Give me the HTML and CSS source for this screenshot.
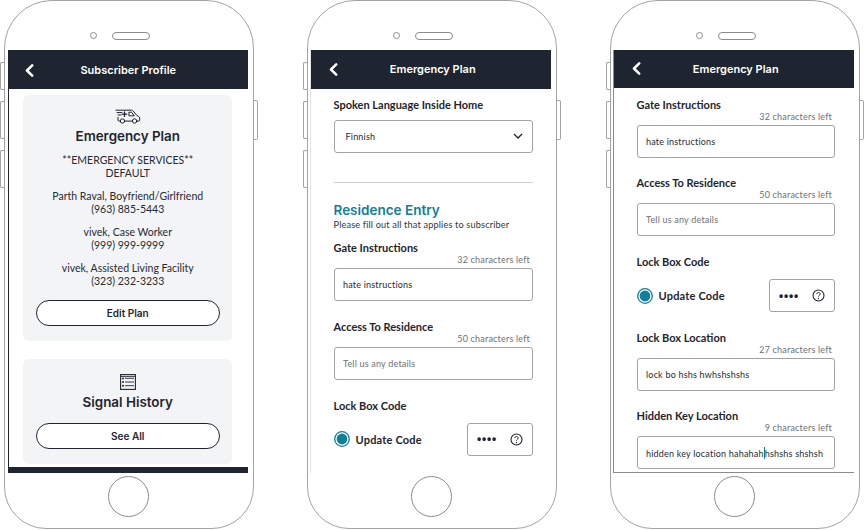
FILE: index.html
```html
<!DOCTYPE html>
<html lang="en">
<head>
<meta charset="utf-8">
<title>Emergency Plan screens</title>
<link rel="stylesheet" href="styles.css">
</head>
<body>
<svg class="defs" width="0" height="0" aria-hidden="true">
  <symbol id="back" viewBox="0 0 9 13"><path d="M7.2 1.4 2 6.5l5.2 5.1" fill="none" stroke="#fff" stroke-width="2.5" stroke-linecap="round" stroke-linejoin="round"/></symbol>
  <symbol id="help" viewBox="0 0 13 13"><circle cx="6.5" cy="6.5" r="5.5" fill="none" stroke="#1f2530" stroke-width="1.1"/><path d="M4.8 5.1c0-1 .8-1.6 1.7-1.6s1.7.6 1.7 1.5c0 1.3-1.7 1.4-1.7 2.6" fill="none" stroke="#1f2530" stroke-width="1"/><circle cx="6.5" cy="9.5" r=".65" fill="#1f2530"/></symbol>
  <symbol id="radio" viewBox="0 0 16 16"><circle cx="8" cy="8" r="7.3" fill="#fff" stroke="#0f7f9b" stroke-width="1.3"/><circle cx="8" cy="8" r="5.4" fill="#0f7f9b"/></symbol>
</svg>

<section class="phone phone-one">
  <span class="side side-a"></span><span class="side side-b"></span><span class="side side-c"></span><span class="side side-r"></span>
  <div class="top"><span class="camera"></span><span class="speaker"></span></div>
  <div class="screen screen-dark">
    <header class="bar bar-tall bar-low"><svg class="back"><use href="#back"/></svg><h1 class="bar-title">Subscriber Profile</h1></header>
    <div class="cards">
      <article class="card">
        <svg class="van" viewBox="0 0 26 15" aria-hidden="true">
          <g fill="none" stroke="#1f2530" stroke-width="1" stroke-linecap="round" stroke-linejoin="round">
            <path d="M1 1.2h15.6c.7 0 1.2.3 1.6.8l3.7 4.5 2 1.2c.5.3.8.8.8 1.3v2.2c0 .5-.4.9-.9.9h-2"/>
            <path d="M17.2 12.1H10M5 12.1H4c-.6 0-1-.4-1-1V8.4"/>
            <path d="M2 3.6h5M3 6h3"/>
            <path d="M9.5 3v4.4M7.3 5.2h4.4" stroke-width="1.3"/>
            <path d="M14.3 3.2h2.2l2.8 3.6h-5z"/>
            <circle cx="7.5" cy="12" r="2.2"/><circle cx="19.6" cy="12" r="2.2"/>
          </g>
        </svg>
        <h2 class="card-title">Emergency Plan</h2>
        <p class="contact">**EMERGENCY SERVICES**<br>DEFAULT</p>
        <p class="contact">Parth Raval, Boyfriend/Girlfriend<br>(963) 885-5443</p>
        <p class="contact">vivek, Case Worker<br>(999) 999-9999</p>
        <p class="contact">vivek, Assisted Living Facility<br>(323) 232-3233</p>
        <button class="pill pill-edit">Edit Plan</button>
      </article>
      <article class="card card-history">
        <svg class="list-icon" viewBox="0 0 16 16" aria-hidden="true">
          <g fill="none" stroke="#1f2530"><rect x=".6" y=".6" width="14.8" height="14.8" stroke-width="1.1"/><path d="M5 4.3h9M5 8h9M5 11.7h9M1 2.4h14" stroke-width=".9"/></g>
          <g fill="#1f2530"><circle cx="3" cy="4.6" r="1"/><circle cx="3" cy="8" r="1"/><circle cx="3" cy="11.7" r="1"/></g>
        </svg>
        <h2 class="card-title">Signal History</h2>
        <button class="pill pill-all">See All</button>
      </article>
    </div>
    <div class="bottom-strip"></div>
  </div>
  <div class="home"><span class="home-button"></span></div>
</section>

<section class="phone phone-two">
  <span class="side side-a"></span><span class="side side-b"></span><span class="side side-c"></span><span class="side side-r"></span>
  <div class="top"><span class="camera"></span><span class="speaker"></span></div>
  <div class="screen">
    <header class="bar bar-tall"><svg class="back"><use href="#back"/></svg><h1 class="bar-title">Emergency Plan</h1></header>
    <div class="form form-two">
      <div class="label label-alone">Spoken Language Inside Home</div>
      <div class="box select">
        <span class="value">Finnish</span>
        <svg class="chevron" viewBox="0 0 10 6" aria-hidden="true"><path d="M1 1l4 4 4-4" fill="none" stroke="#1f2530" stroke-width="1.3"/></svg>
      </div>
      <hr class="rule">
      <h2 class="section-title">Residence Entry</h2>
      <p class="section-note">Please fill out all that applies to subscriber</p>
      <div class="field field-first">
        <div class="label">Gate Instructions</div><div class="count">32 characters left</div>
        <div class="box"><span class="value">hate instructions</span></div>
      </div>
      <div class="field">
        <div class="label">Access To Residence</div><div class="count">50 characters left</div>
        <div class="box"><span class="value placeholder">Tell us any details</span></div>
      </div>
      <div class="field">
        <div class="label">Lock Box Code</div>
        <div class="code-row">
          <svg class="radio"><use href="#radio"/></svg><span class="update">Update Code</span>
          <div class="box code"><span class="dots">••••</span><svg class="help"><use href="#help"/></svg></div>
        </div>
      </div>
    </div>
  </div>
  <div class="home"><span class="home-button"></span></div>
</section>

<section class="phone phone-three">
  <span class="side side-a"></span><span class="side side-b"></span><span class="side side-c"></span><span class="side side-r"></span>
  <div class="top"><span class="camera"></span><span class="speaker"></span></div>
  <div class="screen screen-line">
    <header class="bar bar-short"><svg class="back"><use href="#back"/></svg><h1 class="bar-title">Emergency Plan</h1></header>
    <div class="form form-three">
      <div class="field field-first">
        <div class="label">Gate Instructions</div><div class="count">32 characters left</div>
        <div class="box"><span class="value">hate instructions</span></div>
      </div>
      <div class="field">
        <div class="label">Access To Residence</div><div class="count">50 characters left</div>
        <div class="box"><span class="value placeholder">Tell us any details</span></div>
      </div>
      <div class="field">
        <div class="label">Lock Box Code</div>
        <div class="code-row">
          <svg class="radio"><use href="#radio"/></svg><span class="update">Update Code</span>
          <div class="box code"><span class="dots">••••</span><svg class="help"><use href="#help"/></svg></div>
        </div>
      </div>
      <div class="field">
        <div class="label">Lock Box Location</div><div class="count">27 characters left</div>
        <div class="box"><span class="value">lock bo hshs hwhshshshs</span></div>
      </div>
      <div class="field">
        <div class="label">Hidden Key Location</div><div class="count">9 characters left</div>
        <div class="box"><span class="value nowrap">hidden key location hahahah<span class="caret"></span>hshshs shshsh</span></div>
      </div>
    </div>
  </div>
  <div class="home"><span class="home-button"></span></div>
</section>
</body>
</html>
```

FILE: styles.css
```css
* { box-sizing: border-box; }
html, body { margin: 0; padding: 0; background: #fff; }
body { position: relative; width: 864px; height: 530px; overflow: hidden; font-family: "Lato", "Liberation Sans", sans-serif; color: #1f2530; }
.defs { position: absolute; }
h1, h2, p { margin: 0; }

.phone { position: absolute; top: 0; width: 250px; height: 529px; border: 1.3px solid #a3a3a3; border-radius: 48px 48px 42px 42px; display: flex; flex-direction: column; padding: 0 4.5px 0 2.5px; background: #fff; }
.phone-one { left: 3.5px; padding-left: 3.2px; }
.phone-two { left: 306.5px; }
.phone-three { left: 609.5px; }

.side { position: absolute; width: 4px; border: 1.2px solid #a3a3a3; background: #fff; }
.side-a { left: -4.5px; top: 61px; height: 28px; border-right: 0; border-radius: 2px 0 0 2px; }
.side-b { left: -4.5px; top: 100px; height: 38px; border-right: 0; border-radius: 2px 0 0 2px; }
.side-c { left: -4.5px; top: 149px; height: 38px; border-right: 0; border-radius: 2px 0 0 2px; }
.side-r { right: -5px; top: 99px; height: 40px; border-left: 0; border-radius: 0 2px 2px 0; }

.top { height: 48.7px; flex: none; display: flex; align-items: flex-start; justify-content: center; gap: 15px; padding: 30.5px 16px 0 0; }
.camera { width: 7px; height: 7px; margin-top: .5px; border: 1.1px solid #8c8c8c; border-radius: 50%; }
.speaker { width: 38px; height: 8px; border: 1.2px solid #8c8c8c; border-radius: 4px; }

.screen { height: 423px; flex: none; overflow: hidden; display: flex; flex-direction: column; background: #fff; border-left: 1px solid #e4e4e4; }
.screen-dark { border-left: 1px solid #1f2530; }
.screen-line { border-left: 1px solid #8c8c8c; border-bottom: 1px solid #8c8c8c; }

.bar { flex: none; display: flex; align-items: center; background: #1f2530; padding-left: 17.5px; }
.bar-tall { height: 39px; }
.bar-short { height: 38px; }
.bar-low { padding: 2px 0 0 16.8px; }
.back { width: 9px; height: 13px; flex: none; }
.bar-title { flex: 1; text-align: center; padding-right: 23px; color: #fff; font: 600 11px/16px "Inter", "Liberation Sans", sans-serif; }
.bar-low .bar-title { padding-right: 26px; }

.cards { flex: 1; min-height: 0; padding: 6px 16px 0 14.8px; display: flex; flex-direction: column; }
.card { flex: none; background: #f3f4f6; border-radius: 6px; display: flex; flex-direction: column; align-items: center; height: 246px; padding: 14px 12px 0; }
.card-history { height: 105px; margin-top: 18px; padding-top: 15px; }
.van { width: 26px; height: 15px; flex: none; }
.list-icon { width: 16px; height: 16px; flex: none; }
.card-title { font: 600 13.4px/20px "Inter", "Liberation Sans", sans-serif; margin-top: 2px; color: #1f2530; }
.contact { font-size: 10.5px; line-height: 13px; text-align: center; margin-top: 10px; white-space: nowrap; color: #262b35; }
.card-title + .contact { margin-top: 8px; }
.pill { display: block; width: 184px; height: 26px; flex: none; border: 1.5px solid #1f2530; border-radius: 13px; background: #fff; color: #1f2530; font: 600 10px/1 "Inter", "Liberation Sans", sans-serif; padding: 0; }
.pill-edit { margin-top: 12px; }
.pill-all { margin-top: 11px; }
.bottom-strip { height: 6px; flex: none; background: #1f2530; }

.form { flex: 1; min-height: 0; padding: 9px 18.5px 0 22.5px; }
.form-three { padding: 10px 19.5px 0 22.5px; }
.label { font-size: 11px; line-height: 14px; font-weight: 700; color: #1f2530; white-space: nowrap; }
.label-alone { margin-bottom: 8px; }
.count { font-size: 9px; line-height: 12px; text-align: right; padding-right: 2.5px; margin: -1px 0 2px; letter-spacing: .2px; color: #6d7077; }
.box { border: 1px solid #a3a3a3; border-radius: 3px; height: 33px; display: flex; align-items: center; padding: 0 9px 0 8.5px; background: #fff; }
.select { justify-content: space-between; padding: 0 9px 0 11px; }
.value { font-size: 9px; letter-spacing: .2px; color: #262b35; }
.placeholder { color: #6d7077; }
.nowrap { white-space: nowrap; }
.caret { display: inline-block; width: 1px; height: 12px; background: #0f7f9b; vertical-align: -2px; }
.chevron { width: 10px; height: 6px; }
.rule { border: 0; height: 1px; background: #cfcfcf; margin: 29px 0 0; }
.section-title { color: #0f7f9b; font: 600 13.5px/18px "Inter", "Liberation Sans", sans-serif; margin-top: 18px; }
.section-note { font-size: 9.2px; line-height: 12px; letter-spacing: .15px; color: #33373f; }
.field { margin-top: 18.7px; }
.form-two .field { margin-top: 19px; }
.form-two .field-first { margin-top: 10px; }
.form-three .field-first { margin-top: 0; }
.code-row { display: flex; align-items: center; margin-right: -.5px; margin-top: 10px; }
.radio { width: 16px; height: 16px; flex: none; }
.update { font-size: 11px; font-weight: 700; letter-spacing: .2px; margin-left: 6px; flex: 1; }
.code { width: 66px; flex: none; justify-content: space-between; padding: 0 9px; }
.dots { font: 700 12px/1 "Liberation Sans", sans-serif; letter-spacing: .8px; color: #1f2530; }
.help { width: 13px; height: 13px; flex: none; }

.home { flex: 1; display: flex; justify-content: center; padding: 3.5px 0 0 2px; }
.home-button { width: 41px; height: 41px; border: 1.2px solid #8c8c8c; border-radius: 50%; }
```
